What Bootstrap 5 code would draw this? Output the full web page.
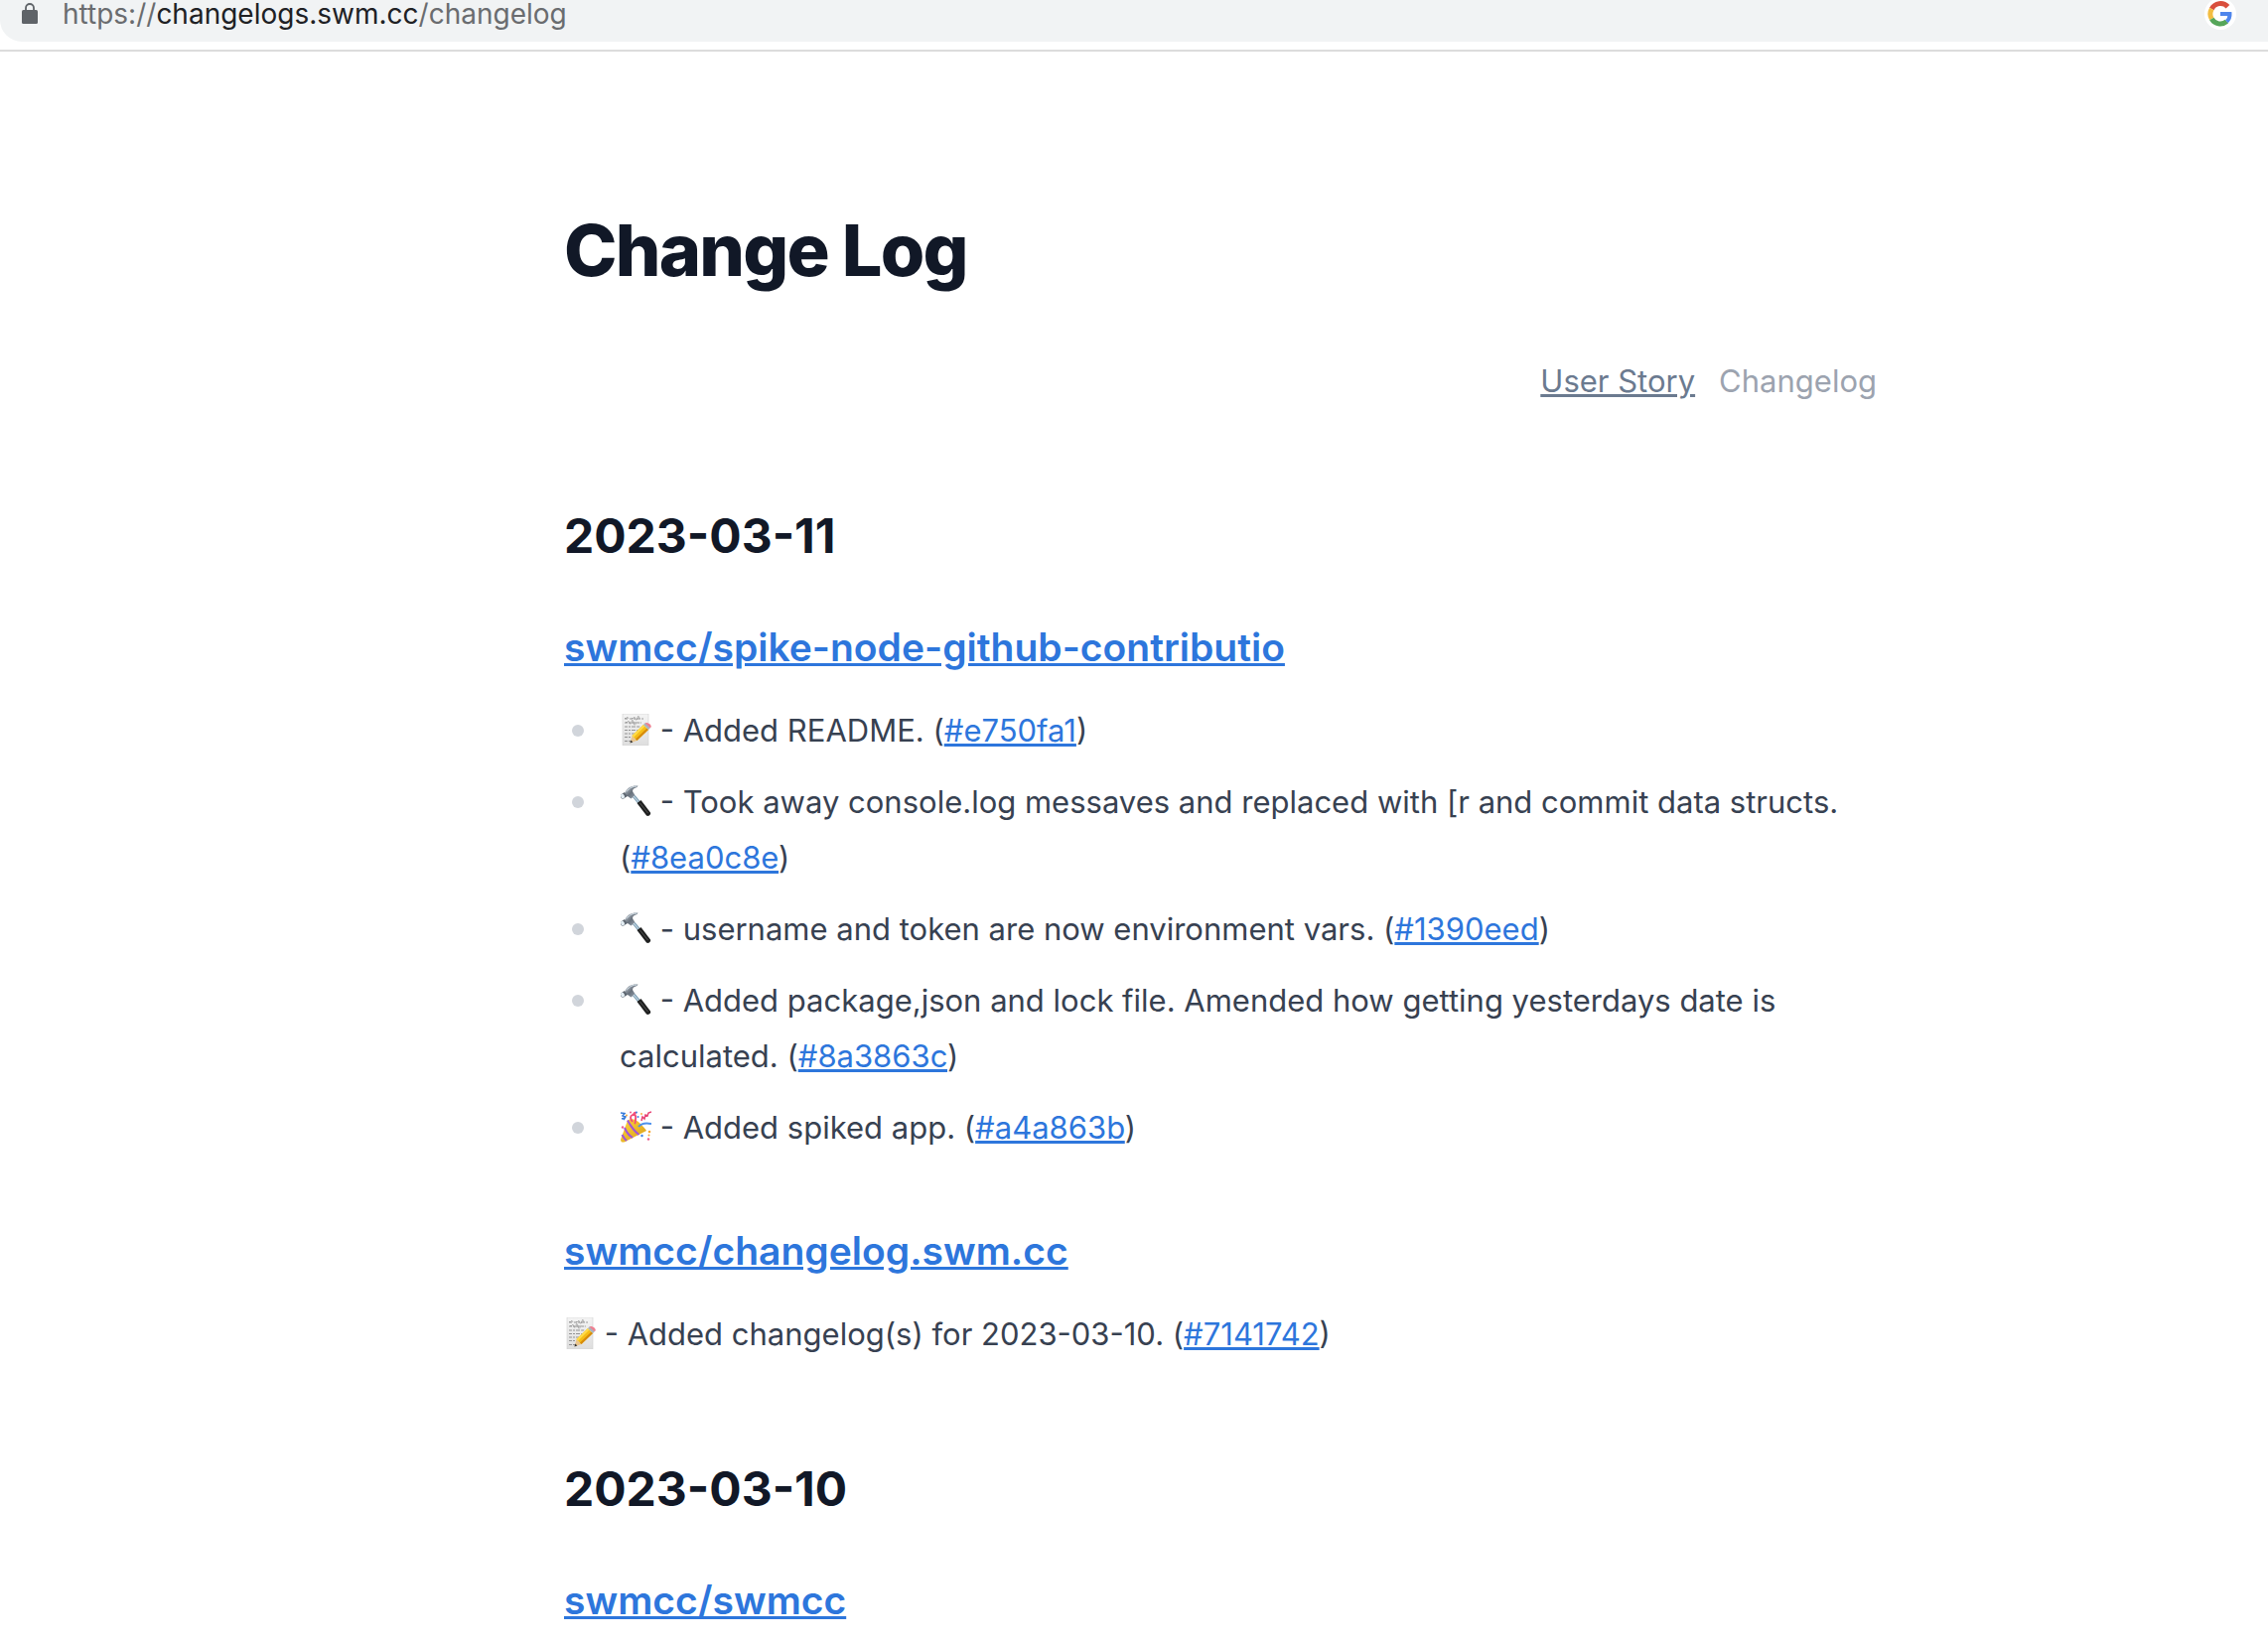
<!DOCTYPE html>
<html lang="en">
<head>
<meta charset="utf-8">
<meta name="viewport" content="width=device-width, initial-scale=1">
<title>Change Log</title>
<link href="https://cdn.jsdelivr.net/npm/bootstrap@5.3.0/dist/css/bootstrap.min.css" rel="stylesheet">
<style>
  body { font-family: Inter, "Liberation Sans", sans-serif; font-size: 31px; line-height: 56px; color: #374151; background: #fff; }
  a { color: #2d76dc; }
  .browser-bar { height: 52px; border-bottom: 2px solid #dcdcdc; }
  .address { height: 42px; padding: 0 32px 14px 22px; background: #f1f3f4; border-bottom-left-radius: 22px; }
  .address-url { font-size: 28px; line-height: 28px; margin-left: 25px; color: #6a6c6f; outline: 0; white-space: nowrap; }
  .address-url b { font-weight: 400; color: #202124; }
  .g-logo { width: 32px; height: 32px; flex: none; }
  .page { max-width: 1890px; padding: 160px 0 0 min(568px, 25%); }
  h1 { font-size: 72px; line-height: 80px; font-weight: 800; letter-spacing: -0.025em; color: #111827; margin: 0 0 64px; }
  h2 { font-size: 48px; line-height: 64px; font-weight: 700; color: #111827; margin: 96px 0 48px; }
  h3 { font-size: 39px; line-height: 64px; font-weight: 600; margin: 0 0 24px; }
  .views { gap: 24px; }
  .views a { color: #6b7a8f; }
  .views span { color: #9ca3af; }
  .entries { margin: 0 0 64px; }
  .entries li { display: flex; margin-bottom: 16px; }
  .entries li::before { content: ""; flex: 0 0 12px; height: 12px; margin: 22px 36px 0 8px; border-radius: 50%; background: #d1d5db; }
  .emo { width: 32px; height: 32px; vertical-align: -4px; }
</style>
<script src="https://cdn.jsdelivr.net/npm/bootstrap@5.3.0/dist/js/bootstrap.bundle.min.js"></script>
</head>
<body class="overflow-hidden">
<svg class="position-absolute" width="0" height="0" aria-hidden="true">
  <defs>
    <linearGradient id="paper" x1="0" y1="0" x2="0" y2="1"><stop offset="0" stop-color="#f4f4f4"/><stop offset="1" stop-color="#dedede"/></linearGradient>
    <linearGradient id="steel" x1="0" y1="0" x2="1" y2="1"><stop offset="0" stop-color="#c3cbd3"/><stop offset=".5" stop-color="#68717c"/><stop offset="1" stop-color="#9eabb8"/></linearGradient>
    <linearGradient id="cone" x1="0" y1="0" x2="1" y2="1"><stop offset="0" stop-color="#ffd83b"/><stop offset="1" stop-color="#d99a17"/></linearGradient>
  </defs>
  <symbol id="memo" viewBox="0 0 32 32">
    <path d="M3 0h26v32H3z" fill="url(#paper)" stroke="#d0d0d0" stroke-width=".6"/>
    <g stroke="#8a8a8a" stroke-width=".9" fill="none" stroke-dasharray="3 1 2 1 4 1.2">
      <path d="M5 5h3M10 5h14M5 9h17M5 13h16M5 16.500h14M5 20h10M5 23.500h6M5 27.500h6"/>
    </g>
    <path d="M5 4q1 2 2 0t2 1M12 4q1 2 2 0t2 1 2-1 2 1M6 8q1 2 2 0t2 1 2-1 2 1 3-1" stroke="#888" stroke-width=".6" fill="none"/>
    <path d="M10.500 29.500l2-7.500 5 5z" fill="#e9c58f"/><path d="M10.500 29.500l.8-3 2 2z" fill="#333"/>
    <path d="M12.500 22 24 11l5 5-11.500 11z" fill="#f6bd16"/>
    <path d="M12.500 22 24 11l1.600 1.500L14 23.700z" fill="#ffdb4a"/><path d="M16 25.500 27.500 14.500l1.500 1.500-11.500 11z" fill="#d68a0c"/>
    <path d="M24 11l2-2 5 5-2 2z" fill="#aab4bd"/>
    <path d="M25.500 9.500Q28 8 30.500 10.500T30.800 14.200z" fill="#ee7f90"/>
  </symbol>
  <symbol id="hammer" viewBox="0 0 32 32">
    <path d="M13 12l2.500-2L23 19l-2.500 2z" fill="#7ea0b6"/><path d="M14 11l7 8" stroke="#dce9f1" stroke-width="1"/>
    <path d="M17.500 18l4-3 9.500 12.500c1 2-2.300 4.500-4 3z" fill="#1f2020"/><path d="M20.500 18l8 10" stroke="#555" stroke-width=".9"/>
    <path d="M5.500 7C8 2 12 0 18.500.5L17.500 2C13.500 3 12.500 5 13.500 7l2 3-4 3.500-3.500-2.500-2.500 1z" fill="url(#steel)"/>
    <path d="M7 6.500C10 2.500 13 1.300 17.500 1" stroke="#d9e6ee" stroke-width="1" fill="none"/>
    <path d="M1 9.500 5 7l2.500 4L3.500 14Q.5 13.500 1 9.500z" fill="#5d6670"/><ellipse cx="3" cy="11" rx="1.800" ry="2.500" transform="rotate(-30 3 11)" fill="#e3edf3"/>
  </symbol>
  <symbol id="party" viewBox="0 0 32 32">
    <path d="M8 9.500Q14 6 20 12t7 8L4.500 31.500Q1 32 1 29z" fill="url(#cone)"/>
    <path d="M8 9.500Q13 19 19.500 24M5 17q3 7 8 10M2.500 24q2 4 4.500 6" stroke="#a054d8" stroke-width="2" fill="none"/>
    <path d="M13 11Q9 6 13 4t3 5q0 3-1 4M14 5q0-4 3-3" stroke="#f24d78" stroke-width="1.900" fill="none"/>
    <path d="M19 16q4-5 13-3" stroke="#4d91ed" stroke-width="2" fill="none"/>
    <path d="M1 2l4 .5L3 5l3 1-2 3M2 8l3-1" stroke="#3479d8" stroke-width="1.500" fill="none"/>
    <path d="M22 10l1-4 2 2 1-4 2 1 1-3 3-1" stroke="#e84274" stroke-width="1.500" fill="none"/>
    <g fill="#f7a735"><circle cx="7" cy="4.500" r="1"/><circle cx="30" cy="21" r="1.300"/><circle cx="29.500" cy="24.500" r="1"/><circle cx="22" cy="3" r=".9"/></g>
    <g fill="#3e82e6"><circle cx="17" cy="1.500" r="1"/><circle cx="22.500" cy="25" r="1.200"/><circle cx="18.500" cy="6" r="1"/></g>
    <g fill="#ed5c8c"><circle cx="29" cy="28.500" r="1.200"/><circle cx="3" cy="16.500" r="1.200"/><circle cx="11" cy="1.500" r="1"/></g>
  </symbol>
</svg>

<header class="browser-bar">
  <div class="address d-flex align-items-center">
    <svg width="16" height="22" viewBox="0 0 16 22" class="flex-shrink-0" role="img" aria-label="Secure connection"><rect y="7" width="16" height="14" rx="1.500" fill="#5f6368"/><path d="M4 8V5a4 4 0 0 1 8 0V8" fill="none" stroke="#5f6368" stroke-width="1.800"/></svg>
    <div class="address-url" role="textbox" contenteditable="true" spellcheck="false" aria-label="Address">https://<b>changelogs.swm.cc</b>/changelog</div>
    <button type="button" class="btn p-0 border-0 ms-auto d-flex" aria-label="Google">
      <svg class="g-logo" viewBox="0 0 32 32" aria-hidden="true"><circle cx="16" cy="16" r="16" fill="#fff"/>
        <g fill="none" stroke-width="5">
          <path d="M23.500 8.700A10 10 0 0 0 7.300 11" stroke="#d94f3d"/><path d="M7.300 11A10 10 0 0 0 7.300 21" stroke="#f3bd42"/>
          <path d="M7.300 21A10 10 0 0 0 22.400 23.700" stroke="#56a65a"/><path d="M22.400 23.700A9.500 9.500 0 0 0 25.500 16H16" stroke="#4f86ec" stroke-width="4"/>
        </g></svg>
    </button>
  </div>
</header>

<main class="page">
  <h1>Change Log</h1>
  <nav class="views d-flex justify-content-end" aria-label="Views">
    <a href="#user-story">User Story</a>
    <span aria-current="page">Changelog</span>
  </nav>

  <section>
    <h2>2023-03-11</h2>
    <h3><a href="#spike">swmcc/spike-node-github-contributio</a></h3>
    <ul class="entries list-unstyled">
      <li><div><svg class="emo" role="img" aria-label="memo"><use href="#memo"/></svg> - Added README. <span class="text-nowrap">(<a href="#e750fa1">#e750fa1</a>)</span></div></li>
      <li><div><svg class="emo" role="img" aria-label="hammer"><use href="#hammer"/></svg> - Took away console.log messaves and replaced with [r and commit data structs. <span class="text-nowrap">(<a href="#8ea0c8e">#8ea0c8e</a>)</span></div></li>
      <li><div><svg class="emo" role="img" aria-label="hammer"><use href="#hammer"/></svg> - username and token are now environment vars. <span class="text-nowrap">(<a href="#1390eed">#1390eed</a>)</span></div></li>
      <li><div><svg class="emo" role="img" aria-label="hammer"><use href="#hammer"/></svg> - Added package,json and lock file. Amended how getting yesterdays date is calculated. <span class="text-nowrap">(<a href="#8a3863c">#8a3863c</a>)</span></div></li>
      <li><div><svg class="emo" role="img" aria-label="party popper"><use href="#party"/></svg> - Added spiked app. <span class="text-nowrap">(<a href="#a4a863b">#a4a863b</a>)</span></div></li>
    </ul>
    <h3><a href="#changelog">swmcc/changelog.swm.cc</a></h3>
    <p class="mb-0"><svg class="emo" role="img" aria-label="memo"><use href="#memo"/></svg> - Added changelog(s) for 2023-03-10. <span class="text-nowrap">(<a href="#7141742">#7141742</a>)</span></p>
  </section>

  <section>
    <h2>2023-03-10</h2>
    <h3 class="mb-0"><a href="#swmcc">swmcc/swmcc</a></h3>
  </section>
</main>
</body>
</html>
